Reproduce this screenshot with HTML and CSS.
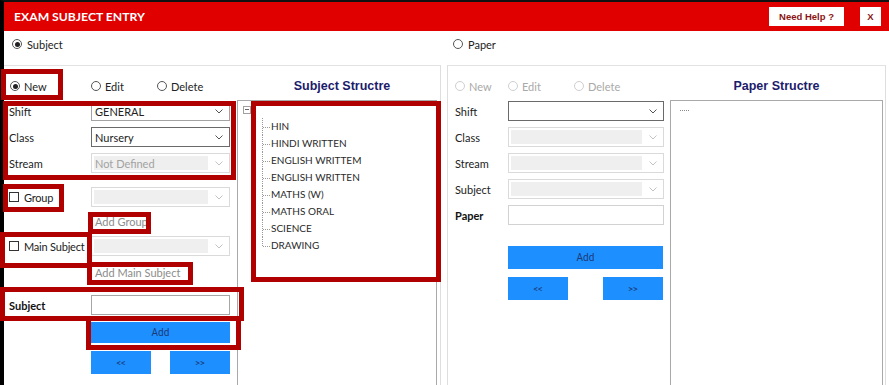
FILE: index.html
```html
<!DOCTYPE html>
<html lang="en">
<head>
    <meta charset="UTF-8">
    <title>Exam Subject Entry</title>
    <link rel="stylesheet" href="styles.css">
</head>
<body>
    <div class="screen">
        <div class="titlebar">
            <span class="title">EXAM SUBJECT ENTRY</span>
            <button class="help-btn">Need Help ?</button>
            <button class="close-btn">X</button>
        </div>

        <div class="modes">
            <label class="radio on"><i></i>Subject</label>
            <label class="radio"><i></i>Paper</label>
        </div>

        <div class="panels">
            <!-- subject side -->
            <section class="panel subject-panel">
                <div class="form-col">
                    <div class="radio-row">
                        <label class="radio on"><i></i>New</label>
                        <label class="radio"><i></i>Edit</label>
                        <label class="radio"><i></i>Delete</label>
                    </div>
                    <div class="field">
                        <span class="lbl">Shift</span>
                        <div class="select"><span class="val">GENERAL</span><svg class="chev" width="8" height="5" viewBox="0 0 8 5"><polyline points="0.5,0.5 4,4 7.5,0.5"/></svg></div>
                    </div>
                    <div class="field">
                        <span class="lbl">Class</span>
                        <div class="select dark"><span class="val">Nursery</span><svg class="chev" width="8" height="5" viewBox="0 0 8 5"><polyline points="0.5,0.5 4,4 7.5,0.5"/></svg></div>
                    </div>
                    <div class="field">
                        <span class="lbl">Stream</span>
                        <div class="select off"><span class="val">Not Defined</span><svg class="chev" width="8" height="5" viewBox="0 0 8 5"><polyline points="0.5,0.5 4,4 7.5,0.5"/></svg></div>
                    </div>
                    <div class="field group-row">
                        <label class="lbl check"><i></i>Group</label>
                        <div class="select off"><span class="val"></span><svg class="chev" width="8" height="5" viewBox="0 0 8 5"><polyline points="0.5,0.5 4,4 7.5,0.5"/></svg></div>
                    </div>
                    <div class="link-row">Add Group</div>
                    <div class="field">
                        <label class="lbl check"><i></i>Main Subject</label>
                        <div class="select off"><span class="val"></span><svg class="chev" width="8" height="5" viewBox="0 0 8 5"><polyline points="0.5,0.5 4,4 7.5,0.5"/></svg></div>
                    </div>
                    <div class="link-row tall">Add Main Subject</div>
                    <div class="field subject-row">
                        <span class="lbl strong">Subject</span>
                        <div class="input"></div>
                    </div>
                    <button class="btn-add">Add</button>
                    <div class="nav-row">
                        <button class="btn-nav">&lt;&lt;</button>
                        <button class="btn-nav">&gt;&gt;</button>
                    </div>
                </div>
                <div class="tree-col">
                    <h2>Subject Structre</h2>
                    <div class="tree">
                        <span class="expander"></span>
                        <ul class="tree-list">
                            <li>HIN</li>
                            <li>HINDI WRITTEN</li>
                            <li>ENGLISH WRITTEM</li>
                            <li>ENGLISH WRITTEN</li>
                            <li>MATHS (W)</li>
                            <li>MATHS ORAL</li>
                            <li>SCIENCE</li>
                            <li>DRAWING</li>
                        </ul>
                    </div>
                </div>
            </section>

            <!-- paper side -->
            <section class="panel paper-panel">
                <div class="form-col">
                    <div class="radio-row">
                        <label class="radio off"><i></i>New</label>
                        <label class="radio off"><i></i>Edit</label>
                        <label class="radio off"><i></i>Delete</label>
                    </div>
                    <div class="field">
                        <span class="lbl">Shift</span>
                        <div class="select dark"><span class="val"></span><svg class="chev" width="8" height="5" viewBox="0 0 8 5"><polyline points="0.5,0.5 4,4 7.5,0.5"/></svg></div>
                    </div>
                    <div class="field">
                        <span class="lbl">Class</span>
                        <div class="select off"><span class="val"></span><svg class="chev" width="8" height="5" viewBox="0 0 8 5"><polyline points="0.5,0.5 4,4 7.5,0.5"/></svg></div>
                    </div>
                    <div class="field">
                        <span class="lbl">Stream</span>
                        <div class="select off"><span class="val"></span><svg class="chev" width="8" height="5" viewBox="0 0 8 5"><polyline points="0.5,0.5 4,4 7.5,0.5"/></svg></div>
                    </div>
                    <div class="field">
                        <span class="lbl">Subject</span>
                        <div class="select off"><span class="val"></span><svg class="chev" width="8" height="5" viewBox="0 0 8 5"><polyline points="0.5,0.5 4,4 7.5,0.5"/></svg></div>
                    </div>
                    <div class="field">
                        <span class="lbl strong">Paper</span>
                        <div class="input light"></div>
                    </div>
                    <button class="btn-add">Add</button>
                    <div class="nav-row">
                        <button class="btn-nav">&lt;&lt;</button>
                        <button class="btn-nav">&gt;&gt;</button>
                    </div>
                </div>
                <div class="tree-col">
                    <h2>Paper Structre</h2>
                    <div class="tree">
                        <span class="dots"></span>
                    </div>
                </div>
            </section>
        </div>
    </div>

    <!-- red highlight boxes drawn over the form -->
    <div class="marks">
        <span class="mark m-new"></span>
        <span class="mark m-shift"></span>
        <span class="mark m-group"></span>
        <span class="mark m-addgroup"></span>
        <span class="mark m-main"></span>
        <span class="mark m-addmain"></span>
        <span class="mark m-subject"></span>
        <span class="mark m-add"></span>
        <span class="mark m-tree"></span>
    </div>
</body>
</html>
```

FILE: styles.css
```css
* {
    margin: 0;
    padding: 0;
    box-sizing: border-box;
}

body {
    position: relative;
    width: 889px;
    height: 385px;
    overflow: hidden;
    background: #fff;
    font-family: Lato, "Open Sans", sans-serif;
    font-size: 11px;
    color: #222;
}

.screen {
    height: 385px;
    border-left: 4px solid #000;
    border-top: 2px solid #111;
}

/* title bar */
.titlebar {
    height: 29px;
    background: #e00000;
    display: flex;
    align-items: center;
    padding: 0 8px 0 10px;
}

.title {
    flex: 1;
    color: #fff;
    font-weight: 700;
    font-size: 12.2px;
}

.help-btn,
.close-btn {
    height: 19px;
    background: #fff;
    border: none;
    color: #8b1414;
    font: bold 9.5px "Liberation Sans", Arial, sans-serif;
}

.help-btn {
    width: 75px;
}

.close-btn {
    width: 21px;
    margin-left: 16px;
}

/* radios and checks */
.radio,
.check {
    display: inline-flex;
    align-items: center;
    gap: 4px;
}

.radio i {
    width: 10px;
    height: 10px;
    border: 1px solid #555;
    border-radius: 50%;
    display: flex;
    align-items: center;
    justify-content: center;
}

.radio.on i::after {
    content: '';
    width: 5px;
    height: 5px;
    border-radius: 50%;
    background: #222;
}

.radio.off {
    color: #a9a9a9;
}

.radio.off i {
    border-color: #cfcfcf;
}

.check {
    gap: 5px;
}

.check i {
    width: 10px;
    height: 10px;
    border: 1px solid #333;
}

.modes {
    height: 34px;
    display: grid;
    grid-template-columns: 441px 1fr;
    align-items: center;
    padding: 0 0 8px 8px;
}

.modes .radio {
    gap: 5px;
}

/* panels */
.panels {
    display: flex;
    gap: 6px;
}

.panel {
    display: flex;
    height: 330px;
    border-top: 1px solid #e2e2e2;
}

.subject-panel {
    --pad: 5px;
    --lbl: 82px;
    --ctl: 139px;
    width: 437px;
    border-right: 1px solid #dedede;
}

.paper-panel {
    --pad: 7px;
    --lbl: 53px;
    --ctl: 156px;
    width: 439px;
    border-left: 1px solid #dedede;
    border-right: 1px solid #dedede;
}

.subject-panel .form-col {
    width: 233px;
}

.subject-panel .tree-col {
    width: 200px;
}

.paper-panel .form-col {
    width: 222px;
}

.paper-panel .tree-col {
    width: 213px;
}

.radio-row {
    height: 32px;
    padding-top: 8px;
    display: flex;
    align-items: center;
}

.subject-panel .radio-row {
    padding-left: 6px;
}

.subject-panel .radio-row .radio:nth-child(1) {
    width: 81px;
}

.subject-panel .radio-row .radio:nth-child(2) {
    width: 66px;
}

.paper-panel .radio-row {
    padding-left: 7px;
}

.paper-panel .radio-row .radio:nth-child(1) {
    width: 53px;
}

.paper-panel .radio-row .radio:nth-child(2) {
    width: 66px;
}

.field {
    height: 26px;
    display: flex;
    align-items: center;
    padding-left: var(--pad);
}

.lbl {
    width: var(--lbl);
}

.lbl.strong {
    font-weight: 700;
    color: #111;
}

.check.lbl {
    letter-spacing: -0.2px;
}

.group-row {
    margin-top: 8px;
}

.subject-row {
    margin-top: 7px;
}

/* select boxes */
.select {
    width: var(--ctl);
    height: 20px;
    display: flex;
    align-items: center;
    padding: 0 6px 0 2px;
    background: #fff;
    border: 1px solid #a3a3a3;
    color: #222;
}

.select.dark {
    border-color: #6a6a6a;
}

.select .val {
    flex: 1;
    padding-left: 1px;
}

.chev {
    fill: none;
    stroke: #555;
    stroke-width: 1;
}

.select.off {
    padding: 2px 6px 2px 2px;
    border-color: #dadada;
}

.select.off .val {
    align-self: stretch;
    display: flex;
    align-items: center;
    margin-right: 7px;
    background: #efefef;
    color: #a2a2a2;
}

.select.off .chev {
    stroke: #c3c3c3;
}

.input {
    width: var(--ctl);
    height: 20px;
    border: 1px solid #a6a6a6;
    background: #fff;
}

.input.light {
    border-color: #d2d2d2;
}

.link-row {
    height: 23px;
    display: flex;
    align-items: center;
    padding-left: calc(var(--pad) + var(--lbl) + 4px);
    color: #8c8c8c;
}

.link-row.tall {
    height: 26px;
}

/* blue buttons */
.btn-add,
.btn-nav {
    display: block;
    border: none;
    background: #1e8fff;
    color: #1b3a78;
    font: 10px Roboto, "Liberation Sans", sans-serif;
}

.btn-add {
    width: var(--ctl);
    height: 21px;
    margin: 4px 0 0 calc(var(--pad) + var(--lbl));
}

.paper-panel .btn-add {
    width: 155px;
    height: 23px;
    margin-top: 18px;
}

.nav-row {
    display: flex;
    justify-content: space-between;
    width: var(--ctl);
    margin: 8px 0 0 calc(var(--pad) + var(--lbl));
}

.paper-panel .nav-row {
    width: 155px;
}

.btn-nav {
    width: 60px;
    height: 23px;
    font-size: 9px;
}

/* structure trees */
.tree-col h2 {
    height: 34px;
    padding-top: 6px;
    display: flex;
    align-items: center;
    justify-content: center;
    font: bold 12.5px "Liberation Sans", Arial, sans-serif;
    color: #1c1c6c;
}

.subject-panel .tree-col h2 {
    padding-left: 10px;
}

.tree {
    height: 300px;
    border: 1px solid #a9a9a9;
    padding-top: 5px;
}

.expander {
    display: block;
    width: 8px;
    height: 8px;
    margin-left: 5px;
    border: 1px solid #a0a0a0;
    position: relative;
}

.expander::after {
    content: '';
    position: absolute;
    left: 1px;
    right: 1px;
    top: 2px;
    border-top: 1px solid #666;
}

.tree-list {
    list-style: none;
    margin: 4px 0 0 24px;
    font-size: 10px;
    color: #2a2a2a;
}

.tree-list li {
    position: relative;
    height: 17px;
    line-height: 17px;
    padding-left: 9px;
}

.tree-list li::before {
    content: '';
    position: absolute;
    left: 0;
    top: 0;
    bottom: 0;
    border-left: 1px dotted #9a9a9a;
}

.tree-list li:last-child::before {
    bottom: 50%;
}

.tree-list li::after {
    content: '';
    position: absolute;
    left: 1px;
    top: 50%;
    width: 7px;
    border-top: 1px dotted #9a9a9a;
}

.dots {
    display: block;
    width: 9px;
    margin: 4px 0 0 9px;
    border-top: 1px dotted #8a8a8a;
}

/* annotation boxes */
.marks {
    position: absolute;
    inset: 0;
    pointer-events: none;
}

.mark {
    position: absolute;
    border: 5px solid #b00000;
}

.m-new      { left: 1px;   top: 69px;  width: 62px;  height: 31px; }
.m-shift    { left: 3px;   top: 101px; width: 233px; height: 79px; }
.m-group    { left: 3px;   top: 184px; width: 61px;  height: 28px; }
.m-addgroup { left: 88px;  top: 212px; width: 63px;  height: 22px; }
.m-main     { left: 0;     top: 232px; width: 92px;  height: 36px; }
.m-addmain  { left: 87px;  top: 262px; width: 106px; height: 23px; }
.m-subject  { left: 0;     top: 287px; width: 244px; height: 34px; }
.m-add      { left: 86px;  top: 316px; width: 155px; height: 34px; }
.m-tree     { left: 251px; top: 101px; width: 190px; height: 181px; }
```
